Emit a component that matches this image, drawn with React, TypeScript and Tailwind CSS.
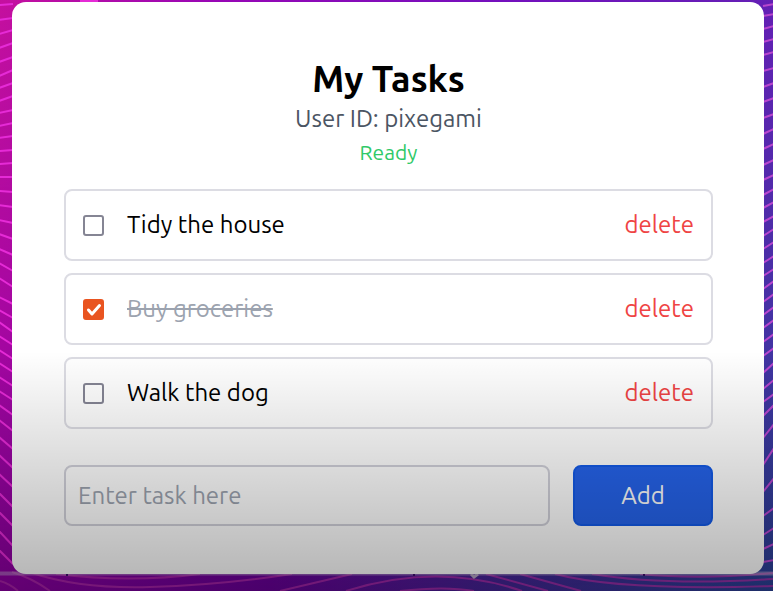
import { useState } from "react";

type Task = { id: number; text: string; done: boolean };

// Each entry: [y at the outer edge, y where the wave meets the card]
const leftWaves: [number, number][] = [
  [5, 4], [20, 18], [34, 30], [48, 43], [62, 57], [76, 70], [88, 83], [101, 96],
  [113, 110], [126, 123], [138, 136], [151, 150], [164, 163], [177, 177], [191, 192],
  [205, 207], [220, 223], [234, 239], [249, 255], [263, 271], [278, 287], [297, 304],
  [310, 318], [322, 332], [336, 345], [350, 359], [363, 372], [377, 386], [391, 400],
  [405, 415], [420, 431], [437, 449], [455, 468], [474, 487], [493, 507], [512, 526],
  [531, 546], [550, 564],
];
const rightWaves: [number, number][] = [
  [4, 6], [14, 16], [26, 29], [39, 42], [52, 55], [68, 71], [83, 87], [98, 102],
  [114, 118], [129, 134], [144, 149], [160, 165], [175, 180], [189, 195], [202, 208],
  [216, 222], [229, 236], [242, 249], [256, 263], [269, 276], [281, 289], [294, 302],
  [307, 315], [320, 328], [334, 342], [348, 356], [363, 373], [380, 389], [394, 402],
  [405, 416], [424, 438], [448, 465], [478, 492], [508, 516], [528, 535], [544, 549], [560, 562],
];
const bottomWaves = [
  "M0 581Q10 584 18 591", "M12 572Q32 578 50 591", "M32 573Q80 589 150 587T292 574",
  "M280 591L352 574", "M346 591Q438 562 522 591", "M400 591Q445 586 474 591",
  "M486 574L548 591", "M520 574L581 591", "M555 574Q620 591 773 586",
  "M592 574Q665 586 773 579", "M640 574Q700 580 773 573", "M56 574Q130 583 200 574",
];

function Backdrop() {
  return (
    <svg aria-hidden="true" className="absolute inset-0 h-full w-full" viewBox="0 0 773 591" preserveAspectRatio="none" fill="none">
      <defs>
        <linearGradient id="sky" x1="0" x2="1" y1="0" y2="0">
          <stop offset="0" stopColor="#c5109f" />
          <stop offset=".28" stopColor="#9807b5" />
          <stop offset=".65" stopColor="#7410bd" />
          <stop offset="1" stopColor="#6420b5" />
        </linearGradient>
        <linearGradient id="sea" x1="0" x2="1" y1="0" y2="0">
          <stop offset="0" stopColor="#8d00a2" />
          <stop offset=".35" stopColor="#680098" />
          <stop offset=".65" stopColor="#422594" />
          <stop offset="1" stopColor="#2a4296" />
        </linearGradient>
        <linearGradient id="fade" x1="0" x2="0" y1="0" y2="1">
          <stop offset="0" stopColor="#fff" stopOpacity="0" />
          <stop offset="1" stopColor="#fff" />
        </linearGradient>
        <mask id="depth"><rect width="773" height="591" fill="url(#fade)" /></mask>
      </defs>
      <rect width="773" height="591" fill="url(#sky)" />
      <rect width="773" height="591" fill="url(#sea)" mask="url(#depth)" />
      <g stroke="#e52bd6" strokeWidth="2">
        {leftWaves.map(([a, b]) => <path key={a} d={`M-1 ${a}L13 ${b}`} />)}
      </g>
      <g stroke="#b946ce" strokeWidth="2">
        {rightWaves.map(([a, b]) => <path key={a} d={`M763 ${b}L774 ${a}`} />)}
      </g>
      <g stroke="#b52dad" strokeWidth="2" opacity=".75">
        {bottomWaves.map((d) => <path key={d} d={d} />)}
      </g>
      <path d="M80 1H98" stroke="#e52bd6" strokeWidth="2" />
      <path d="M0 573.500H773" stroke="#c8b4d5" strokeOpacity=".45" strokeWidth="4" />
      <path d="M67 572V576M414 572V576M644 572V576" stroke="#3b106b" strokeWidth="2" />
      <path d="M471 574L474 577L478 574" stroke="#b5a4c4" strokeWidth="3" />
    </svg>
  );
}

export default function App() {
  const [tasks, setTasks] = useState<Task[]>([
    { id: 1, text: "Tidy the house", done: false },
    { id: 2, text: "Buy groceries", done: true },
    { id: 3, text: "Walk the dog", done: false },
  ]);
  const [draft, setDraft] = useState("");

  const toggle = (id: number) =>
    setTasks(tasks.map((t) => (t.id === id ? { ...t, done: !t.done } : t)));
  const remove = (id: number) => setTasks(tasks.filter((t) => t.id !== id));
  const add = () => {
    if (!draft.trim()) return;
    setTasks([...tasks, { id: Date.now(), text: draft.trim(), done: false }]);
    setDraft("");
  };

  return (
    <div className="relative min-h-screen overflow-hidden pt-0.5 pr-[9px] pb-[17px] pl-3 font-['Ubuntu','Noto_Sans',sans-serif] text-[24px] leading-[34px]">
      <Backdrop />
      <main className="relative rounded-[14px] bg-white pt-[57px] pr-[51px] pb-12 pl-[52px]">
        <header className="text-center">
          <h1 className="text-[36px] leading-10 font-bold text-black">My Tasks</h1>
          <p className="mt-[3px] text-[#4b5563]">User ID: pixegami</p>
          <p className="text-[21px] leading-8 text-[#2fc968]">Ready</p>
        </header>

        <ul className="mt-[21px] flex flex-col gap-3">
          {tasks.map((task) => (
            <li key={task.id} className="flex h-[72px] items-center rounded-lg border-2 border-[#dcdce3] px-[17px]">
              <label className="flex flex-1 items-center gap-[23px]">
                <span className="relative flex size-[21px]">
                  <input
                    type="checkbox"
                    checked={task.done}
                    onChange={() => toggle(task.id)}
                    className="peer size-[21px] appearance-none rounded-[3px] border-2 border-[#858594] checked:border-[#e95420] checked:bg-[#e95420]"
                  />
                  <svg aria-hidden="true" viewBox="0 0 21 21" fill="none" className="pointer-events-none absolute inset-0 hidden peer-checked:block">
                    <path d="M5.500 11L9 15L16.500 6.500" stroke="white" strokeWidth="3" strokeLinecap="round" strokeLinejoin="round" />
                  </svg>
                </span>
                <span className={task.done ? "text-[#9ca3af] line-through" : "text-black"}>{task.text}</span>
              </label>
              <button type="button" onClick={() => remove(task.id)} className="text-[#ef4444]">delete</button>
            </li>
          ))}
        </ul>

        <form
          className="mt-9 flex gap-[23px]"
          onSubmit={(e) => {
            e.preventDefault();
            add();
          }}
        >
          <input
            type="text"
            aria-label="New task"
            placeholder="Enter task here"
            value={draft}
            onChange={(e) => setDraft(e.target.value)}
            className="h-[61px] min-w-0 flex-1 rounded-lg border-2 border-[#d1d1da] px-3 placeholder:text-[#9ca3af]"
          />
          <button type="submit" className="w-[140px] rounded-lg border-2 border-[#135ae8] bg-[#2563eb] text-white">Add</button>
        </form>
      </main>
      <div className="pointer-events-none absolute inset-x-0 bottom-0 h-[240px] bg-linear-to-b from-black/0 to-black/30" />
    </div>
  );
}
